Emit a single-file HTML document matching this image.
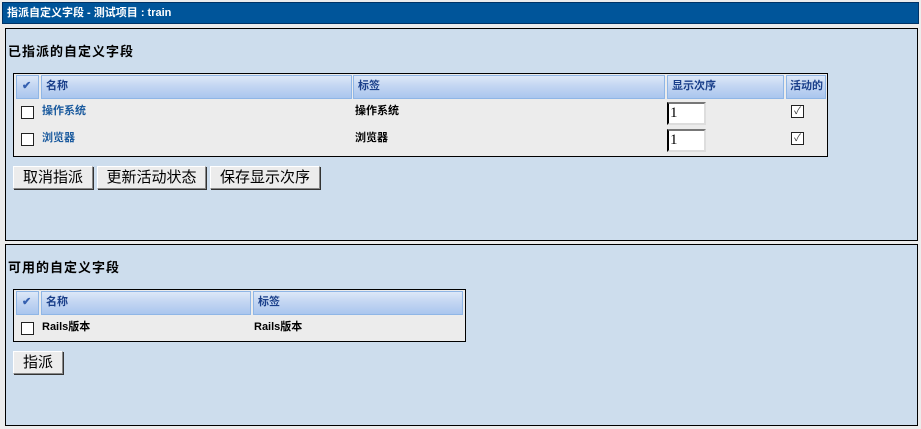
<!DOCTYPE html>
<html><head><meta charset="utf-8"><style>
*{margin:0;padding:0;box-sizing:border-box}
body{width:921px;height:429px;background:#ececec;position:relative;overflow:hidden;font-family:"Liberation Sans","Noto Sans CJK SC",sans-serif;font-size:11px}
.a{position:absolute}
.hdr{left:2px;top:2px;width:917px;height:22px;background:#00559a;border:1px solid #003366;color:#fff;font-weight:bold;font-size:11px;line-height:20px;padding-left:4px}
.panel{background:#cddded;border:1px solid #000}
.tbl{background:#ececec;border:1px solid #000}
.th{background:linear-gradient(#dde8f8,#c3d6f2 45%,#aac6ee);border:1px solid #8fb6e6;color:#1a3f8a;font-weight:bold;font-size:11px;line-height:20px;padding-left:4px}
.cb{width:13px;height:13px;border:1px solid #222;background:#fff}
.lnk{color:#1a5a9e;font-weight:bold}
.bt{font-weight:bold;color:#000}
.btn{background:#ececec;border:1px solid #888;border-top-color:#fff;border-left-color:#fff;box-shadow:1px 1px 0 #333;font-size:15px;line-height:21px;text-align:center;color:#000}
.inp{width:39px;height:23px;background:#fff;border:2px solid #ddd;border-top-color:#777;border-left-color:#000;font-size:15px;line-height:19px;padding-left:1px;font-family:"Liberation Serif",serif}
.ck{font-size:10px;line-height:11px;text-align:center;color:#333}
h2{position:absolute;font-size:13px;font-weight:bold;letter-spacing:1px}
</style></head><body>
<div class="a hdr">指派自定义字段 - 测试项目 : train</div>

<div class="a panel" style="left:5px;top:28px;width:913px;height:213px"></div>
<h2 style="left:8px;top:41px">已指派的自定义字段</h2>
<div class="a tbl" style="left:13px;top:73px;width:815px;height:84px"></div>
<div class="a th" style="left:16px;top:75px;width:23px;height:24px;padding-left:5px;color:#3560b0">✔</div>
<div class="a th" style="left:41px;top:75px;width:311px;height:24px">名称</div>
<div class="a th" style="left:353px;top:75px;width:312px;height:24px">标签</div>
<div class="a th" style="left:667px;top:75px;width:117px;height:24px">显示次序</div>
<div class="a th" style="left:786px;top:75px;width:40px;height:24px;padding-left:3px">活动的</div>
<div class="a cb" style="left:21px;top:106px"></div>
<div class="a lnk" style="left:42px;top:102px">操作系统</div>
<div class="a bt" style="left:355px;top:102px">操作系统</div>
<div class="a inp" style="left:667px;top:102px">1</div>
<div class="a cb ck" style="left:791px;top:105px">✓</div>
<div class="a cb" style="left:21px;top:133px"></div>
<div class="a lnk" style="left:42px;top:129px">浏览器</div>
<div class="a bt" style="left:355px;top:129px">浏览器</div>
<div class="a inp" style="left:667px;top:129px">1</div>
<div class="a cb ck" style="left:791px;top:132px">✓</div>
<div class="a btn" style="left:13px;top:166px;width:80px;height:23px">取消指派</div>
<div class="a btn" style="left:97px;top:166px;width:109px;height:23px">更新活动状态</div>
<div class="a btn" style="left:210px;top:166px;width:110px;height:23px">保存显示次序</div>

<div class="a panel" style="left:5px;top:244px;width:913px;height:182px"></div>
<h2 style="left:8px;top:257px">可用的自定义字段</h2>
<div class="a tbl" style="left:13px;top:289px;width:453px;height:53px"></div>
<div class="a th" style="left:16px;top:291px;width:23px;height:24px;padding-left:5px;color:#3560b0">✔</div>
<div class="a th" style="left:41px;top:291px;width:210px;height:24px">名称</div>
<div class="a th" style="left:253px;top:291px;width:210px;height:24px">标签</div>
<div class="a cb" style="left:21px;top:322px"></div>
<div class="a bt" style="left:42px;top:318px">Rails版本</div>
<div class="a bt" style="left:254px;top:318px">Rails版本</div>
<div class="a btn" style="left:13px;top:351px;width:50px;height:23px">指派</div>
</body></html>
